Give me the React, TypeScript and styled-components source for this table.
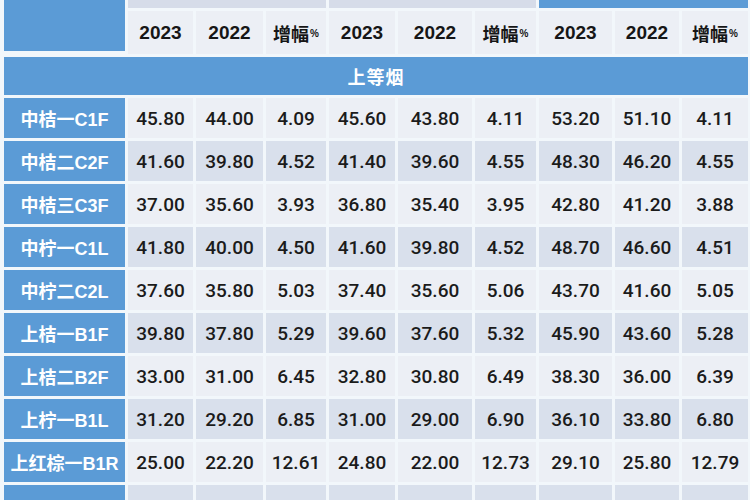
import React from "react";
import styled, { createGlobalStyle } from "styled-components";

const Global = createGlobalStyle`
  html, body { margin: 0; padding: 0; background: #f2f7fb; }
  body { width: 750px; height: 500px; overflow: hidden; }
`;

const BLUE = "#5b9bd6";
const LIGHT = "#eceff5";
const DARK = "#d9e0ec";

const Table = styled.div`
  display: grid;
  grid-template-columns: 121px 65px 67px 60px 66px 74px 61px 73px 64px 66px;
  grid-template-rows: 8px 43px 38px repeat(10, 40px);
  column-gap: 3px;
  row-gap: 3px;
  padding-left: 4px;
  font-family: "Liberation Sans", Arial, "Noto Sans CJK SC", sans-serif;
`;

const Corner = styled.div`
  grid-row: 1 / span 2;
  background: ${BLUE};
  margin-bottom: 3px;
`;

const Group = styled.div<{ $blue?: boolean; $span: string }>`
  grid-column: ${(p) => p.$span};
  background: ${(p) => (p.$blue ? BLUE : "#d6dce9")};
`;

const YearCell = styled.div`
  background: ${LIGHT};
  display: flex;
  align-items: center;
  justify-content: center;
  font-size: 19px;
  font-weight: 700;
  color: #161616;
`;

const Pct = styled.span`
  font-size: 10px;
  font-weight: 700;
  margin-left: 1px;
  margin-top: 2px;
`;

const Cn = styled.span`
  font-family: "Noto Sans CJK SC", sans-serif;
  font-size: 18px;
  font-weight: 700;
`;

const Section = styled.div`
  grid-column: 1 / -1;
  background: ${BLUE};
  color: #fff;
  display: flex;
  align-items: center;
  justify-content: center;
  font-family: "Noto Sans CJK SC", sans-serif;
  font-size: 18px;
  font-weight: 700;
  letter-spacing: 1px;
`;

const Label = styled.div`
  background: ${BLUE};
  color: #fff;
  display: flex;
  align-items: center;
  justify-content: center;
  font-family: "Liberation Sans", "Noto Sans CJK SC", sans-serif;
  font-size: 18px;
  font-weight: 700;
  white-space: nowrap;
`;

const Cell = styled.div<{ $dark: boolean }>`
  background: ${(p) => (p.$dark ? DARK : LIGHT)};
  display: flex;
  align-items: center;
  justify-content: center;
  font-family: "Roboto", "Liberation Sans", sans-serif;
  font-size: 19px;
  font-weight: 500;
  color: #1b1b1b;
`;

const rows: string[][] = [
  ["中桔一C1F", "45.80", "44.00", "4.09", "45.60", "43.80", "4.11", "53.20", "51.10", "4.11"],
  ["中桔二C2F", "41.60", "39.80", "4.52", "41.40", "39.60", "4.55", "48.30", "46.20", "4.55"],
  ["中桔三C3F", "37.00", "35.60", "3.93", "36.80", "35.40", "3.95", "42.80", "41.20", "3.88"],
  ["中柠一C1L", "41.80", "40.00", "4.50", "41.60", "39.80", "4.52", "48.70", "46.60", "4.51"],
  ["中柠二C2L", "37.60", "35.80", "5.03", "37.40", "35.60", "5.06", "43.70", "41.60", "5.05"],
  ["上桔一B1F", "39.80", "37.80", "5.29", "39.60", "37.60", "5.32", "45.90", "43.60", "5.28"],
  ["上桔二B2F", "33.00", "31.00", "6.45", "32.80", "30.80", "6.49", "38.30", "36.00", "6.39"],
  ["上柠一B1L", "31.20", "29.20", "6.85", "31.00", "29.00", "6.90", "36.10", "33.80", "6.80"],
  ["上红棕一B1R", "25.00", "22.20", "12.61", "24.80", "22.00", "12.73", "29.10", "25.80", "12.79"],
  ["", "", "", "", "", "", "", "", "", ""],
];

const years = ["2023", "2022", "pct"];

export default function App() {
  return (
    <>
      <Global />
      <Table>
        <Corner />
        <Group $span="2 / span 3" />
        <Group $span="5 / span 3" />
        <Group $span="8 / span 3" $blue />
        {[0, 1, 2].flatMap((g) =>
          years.map((y) => (
            <YearCell key={`${g}-${y}`}>
              {y === "pct" ? (
                <>
                  <Cn>增幅</Cn>
                  <Pct>%</Pct>
                </>
              ) : (
                y
              )}
            </YearCell>
          ))
        )}
        <Section>上等烟</Section>
        {rows.map((r, i) => (
          <React.Fragment key={i}>
            <Label>{r[0]}</Label>
            {r.slice(1).map((v, j) => (
              <Cell key={j} $dark={i % 2 === 1}>
                {v}
              </Cell>
            ))}
          </React.Fragment>
        ))}
      </Table>
    </>
  );
}
